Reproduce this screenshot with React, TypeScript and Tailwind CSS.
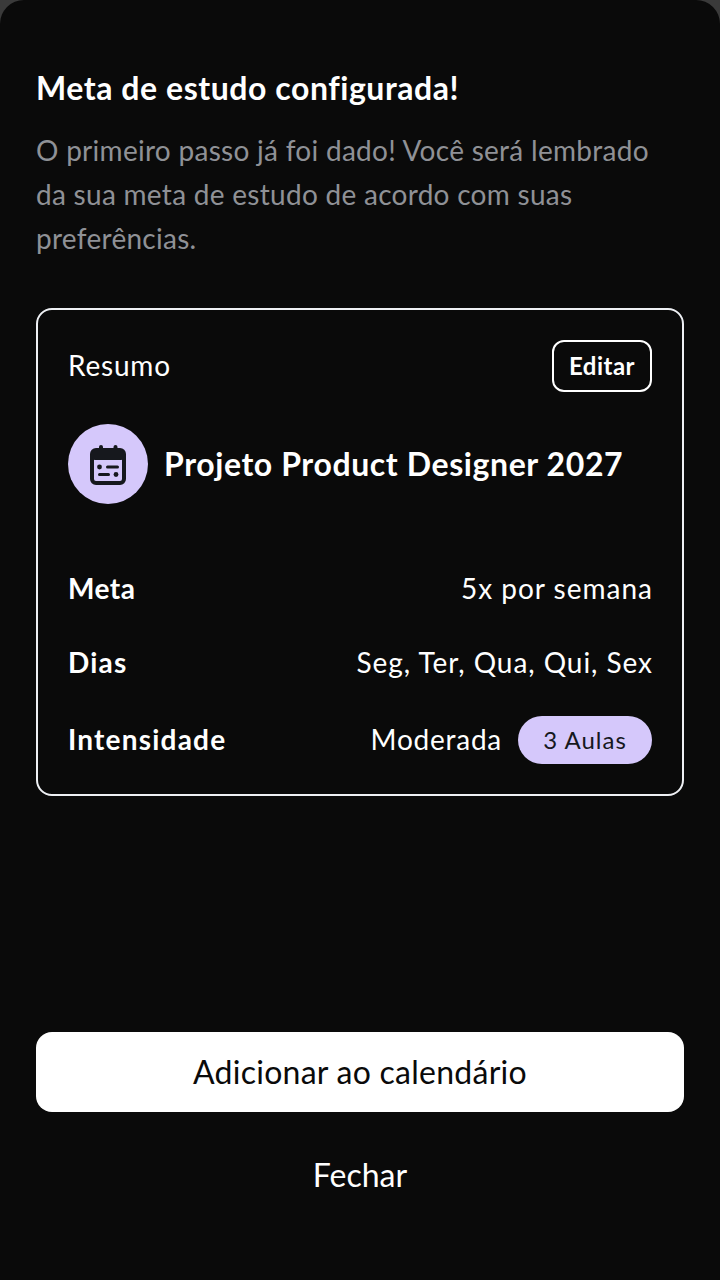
export default function App() {
  return (
    <div className="w-[720px] h-[1280px] bg-[#3a3a3a] font-['Lato','Noto_Sans',sans-serif]">
      <div className="h-full rounded-t-[24px] bg-[#0a0a0a] flex flex-col px-9 pt-[68px] text-white">
        <h1 className="text-[32px] leading-10 font-bold tracking-[0.55px]">Meta de estudo configurada!</h1>
        <p className="mt-[20px] w-[630px] text-[28px] leading-[44px] tracking-[0.28px] text-[#8f9196]">
          O primeiro passo já foi dado! Você será lembrado da sua meta de estudo de acordo com suas preferências.
        </p>

        <div className="mt-[48px] h-[488px] rounded-2xl border-2 border-[#eef0f4] px-[30px] pt-[30px]">
          <div className="flex items-center justify-between">
            <span className="text-[28px] leading-[38px] pb-[2px] tracking-[0.8px]">Resumo</span>
            <button className="w-[100px] h-[52px] rounded-xl border-2 border-white text-[24px] font-bold tracking-[0.5px]">Editar</button>
          </div>

          <div className="mt-8 flex items-center gap-4">
            <div className="w-20 h-20 rounded-full bg-[#d5c8fb] flex items-center justify-center">
              <svg className="mt-[2px]" width="36" height="40" viewBox="0 0 36 40" fill="none">
                <rect x="9" y="0" width="4" height="8" rx="2" fill="#16181d" />
                <rect x="23.5" y="0" width="4" height="8" rx="2" fill="#16181d" />
                <rect x="2" y="5" width="32" height="33" rx="4" stroke="#16181d" strokeWidth="4" fill="none" />
                <rect x="2" y="5" width="32" height="10" rx="3" fill="#16181d" />
                <circle cx="9.5" cy="22" r="2.4" fill="#16181d" />
                <rect x="16" y="20.5" width="13" height="3" rx="1.5" fill="#16181d" />
                <rect x="8" y="28" width="12" height="3" rx="1.5" fill="#16181d" />
                <circle cx="26" cy="29.5" r="2.4" fill="#16181d" />
              </svg>
            </div>
            <span className="text-[32px] leading-10 font-bold tracking-[0.6px]">Projeto Product Designer 2027</span>
          </div>

          <div className="mt-[64px] flex flex-col">
            <div className="flex items-center justify-between h-10">
              <span className="text-[28px] font-bold tracking-[0.5px]">Meta</span>
              <span className="text-[28px] tracking-[1px] -mr-[1px]">5x por semana</span>
            </div>
            <div className="mt-[34px] flex items-center justify-between h-10">
              <span className="text-[28px] font-bold tracking-[1.2px]">Dias</span>
              <span className="text-[28px] tracking-[0.95px] -mr-[1px]">Seg, Ter, Qua, Qui, Sex</span>
            </div>
            <div className="mt-[34px] flex items-center justify-between h-12">
              <span className="text-[28px] leading-[38px] pb-[2px] font-bold tracking-[1.2px]">Intensidade</span>
              <div className="flex items-center gap-4">
                <span className="text-[28px] leading-[38px] pb-[2px] tracking-[0.75px]">Moderada</span>
                <span className="w-[134px] h-12 rounded-full bg-[#d5c8fb] text-[#16181d] text-[24px] tracking-[1px] flex items-center justify-center">3 Aulas</span>
              </div>
            </div>
          </div>
        </div>

        <button className="mt-[236px] h-20 rounded-2xl bg-white text-[#0a0a0a] text-[32px] tracking-[0.26px]">Adicionar ao calendário</button>
        <button className="mt-[23px] h-20 text-[32px]">Fechar</button>
      </div>
    </div>
  );
}
